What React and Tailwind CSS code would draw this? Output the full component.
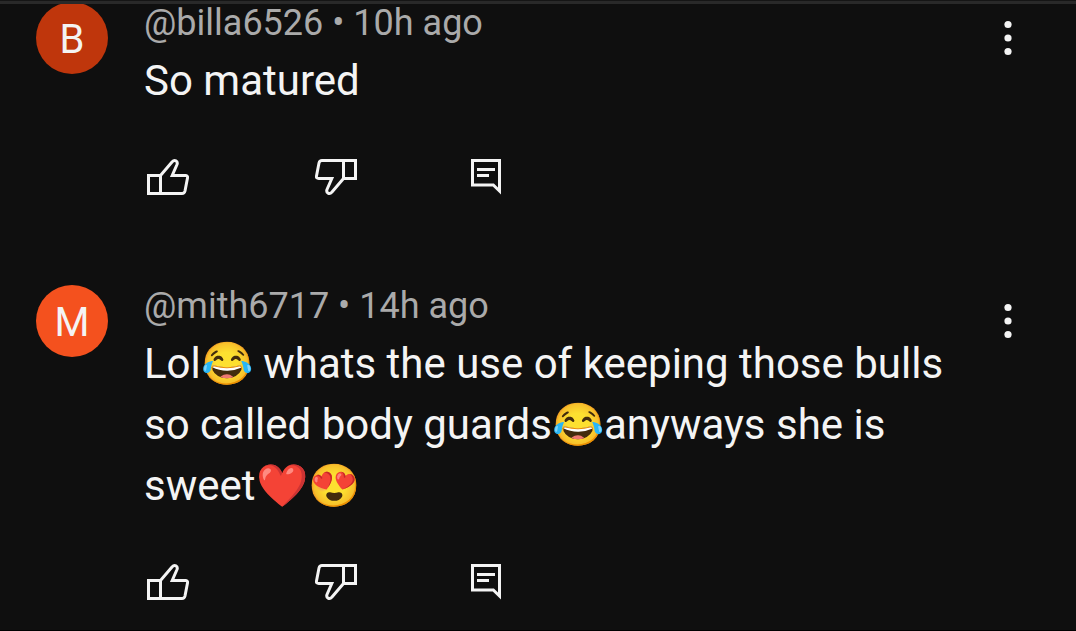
function ThumbUp({ className = "" }) {
  return (
    <svg viewBox="0 0 42 36" className={`block h-9 w-[42px] ${className}`} fill="none" stroke="currentColor" strokeWidth="3" aria-hidden="true">
      <path d="M1.5 16.5H13.5L25 3C27.6 .2 31.2 2 30 5.5L25.2 16.5H38.3Q41 16.5 40.5 19L38 32Q37.4 34.5 35 34.5H1.5ZM13.5 16.5V34.5" />
    </svg>
  );
}

function CommentIcon() {
  return (
    <svg viewBox="0 0 30 36" className="block h-9 w-[30px]" fill="none" stroke="currentColor" strokeWidth="3" aria-hidden="true">
      <path d="M1.5 1.5H28.5V32L22.3 26H1.5ZM6 10.5H24M6 16.5H18" />
    </svg>
  );
}

function Comment({ initial, color, author, age, children }) {
  return (
    <article className="flex items-start gap-9 pl-9 pr-12">
      <div className={`flex size-[72px] shrink-0 items-center justify-center rounded-full pt-1 text-[40px] leading-none ${color}`}>
        {initial}
      </div>
      <div className="min-w-0 flex-1">
        <h2 className="mb-1.5 text-[36px] leading-[42px] text-[#aaaaaa]">
          {author} • {age}
        </h2>
        <p className="text-[42px] leading-[61px]">{children}</p>
        <div className="mt-12 grid grid-cols-[168px_156px_42px] pl-[3px]">
          <button type="button" aria-label="Like"><ThumbUp /></button>
          <button type="button" aria-label="Dislike"><ThumbUp className="rotate-180" /></button>
          <button type="button" aria-label="Reply"><CommentIcon /></button>
        </div>
      </div>
      <button type="button" aria-label="More options" className="mt-[18px] w-10 shrink-0">
        <svg viewBox="0 0 40 36" className="block h-9 w-10" fill="currentColor" aria-hidden="true">
          <circle cx="20" cy="4.5" r="3.6" />
          <circle cx="20" cy="18" r="3.6" />
          <circle cx="20" cy="31.5" r="3.6" />
        </svg>
      </button>
    </article>
  );
}

export default function App() {
  return (
    <div className="flex min-h-screen flex-col border-b border-black bg-[#0f0f0f] font-['Roboto',sans-serif] text-[#f4f4f4]">
      <div className="relative z-10 h-1 border-t border-[#151515] bg-[#292929]" />
      <main className="-mt-0.5 flex flex-col gap-[90px]">
        <Comment initial="B" color="bg-[#bf360c]" author="@billa6526" age="10h ago">
          So matured
        </Comment>
        <Comment initial="M" color="bg-[#f4511e]" author="@mith6717" age="14h ago">
          Lol😂 whats the use of keeping those bulls so called body guards😂anyways she is sweet❤️😍
        </Comment>
      </main>
    </div>
  );
}
